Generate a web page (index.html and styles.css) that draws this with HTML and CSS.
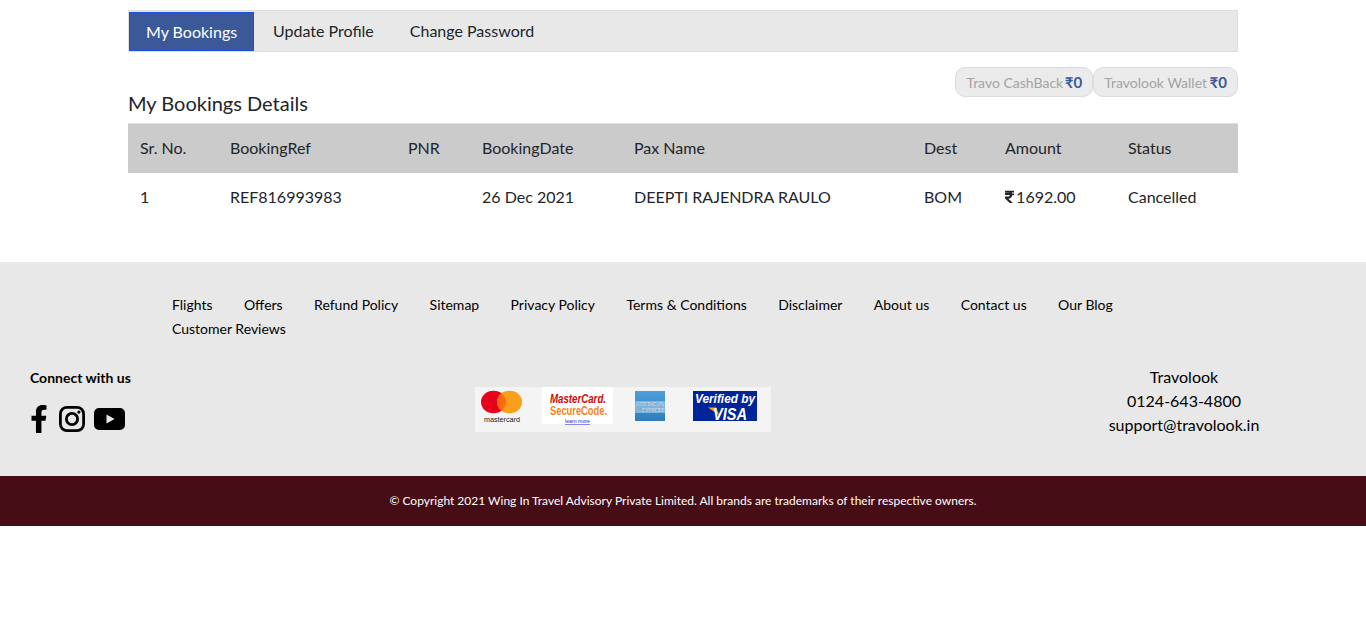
FILE: index.html
```html
<!DOCTYPE html>
<html lang="en">
  <head>
    <meta charset="UTF-8" />
    <meta name="viewport" content="width=device-width, initial-scale=1.0" />
    <title>My Bookings</title>
    <link rel="stylesheet" href="styles.css">
  </head>
  <body>
    <div class="container">
      <div class="tabs">
        <a href="#" class="tab active">My Bookings</a>
        <a href="#" class="tab">Update Profile</a>
        <a href="#" class="tab">Change Password</a>
      </div>

      <div class="wallets">
        <span class="pill">Travo CashBack <b>₹0</b></span>
        <span class="pill">Travolook Wallet <b>₹0</b></span>
      </div>

      <h2 class="title">My Bookings Details</h2>

      <table class="bookings">
        <colgroup>
          <col class="c-sr" />
          <col class="c-ref" />
          <col class="c-pnr" />
          <col class="c-date" />
          <col class="c-pax" />
          <col class="c-dest" />
          <col class="c-amount" />
          <col class="c-status" />
        </colgroup>
        <thead>
          <tr>
            <th>Sr. No.</th>
            <th>BookingRef</th>
            <th>PNR</th>
            <th>BookingDate</th>
            <th>Pax Name</th>
            <th>Dest</th>
            <th>Amount</th>
            <th>Status</th>
          </tr>
        </thead>
        <tbody>
          <tr>
            <td>1</td>
            <td>REF816993983</td>
            <td></td>
            <td>26 Dec 2021</td>
            <td>DEEPTI RAJENDRA RAULO</td>
            <td>BOM</td>
            <td>
              <svg class="rupee" viewBox="0 0 320 512">
                <path d="M308 96c6.627 0 12-5.373 12-12V44c0-6.627-5.373-12-12-12H12C5.373 32 0 37.373 0 44v44.748c0 6.627 5.373 12 12 12h85.28c27.308 0 48.261 5.958 61.97 16.818H12c-6.627 0-12 5.373-12 12v40c0 6.627 5.373 12 12 12h158.757c-6.217 36.086-32.961 58.012-74.757 58.012H12c-6.627 0-12 5.373-12 12v53.012c0 3.349 1.4 6.546 3.861 8.818l165.052 152.356a12.001 12.001 0 0 0 8.139 3.182h82.562c10.924 0 16.166-13.408 8.139-20.818L116.871 319.906c76.499-2.34 131.144-53.395 138.318-127.906H308c6.627 0 12-5.373 12-12v-40c0-6.627-5.373-12-12-12h-58.69c-3.486-11.541-8.28-22.246-14.252-32H308z" />
              </svg>
              1692.00
            </td>
            <td>Cancelled</td>
          </tr>
        </tbody>
      </table>
    </div>

    <footer class="footer">
      <ul class="footer-links">
        <li><a href="#">Flights</a></li>
        <li><a href="#">Offers</a></li>
        <li><a href="#">Refund Policy</a></li>
        <li><a href="#">Sitemap</a></li>
        <li><a href="#">Privacy Policy</a></li>
        <li><a href="#">Terms &amp; Conditions</a></li>
        <li><a href="#">Disclaimer</a></li>
        <li><a href="#">About us</a></li>
        <li><a href="#">Contact us</a></li>
        <li><a href="#">Our Blog</a></li>
        <li><a href="#">Customer Reviews</a></li>
      </ul>

      <div class="footer-row">
        <div class="connect">
          <h4>Connect with us</h4>
          <div class="social">
            <svg class="fb" viewBox="0 0 320 512">
              <path d="M279.14 288l14.22-92.66h-88.91v-60.13c0-25.35 12.42-50.06 52.24-50.06h40.42V6.26S260.43 0 225.36 0c-73.22 0-121.08 44.38-121.08 124.72v70.62H22.89V288h81.39v224h100.17V288z" />
            </svg>
            <svg class="insta" viewBox="0 0 26 26">
              <rect x="1.4" y="1.4" width="23.2" height="23.2" rx="6.5" />
              <circle cx="13" cy="13" r="5.6" />
              <circle class="dot" cx="19.9" cy="6.1" r="1.6" />
            </svg>
            <svg class="yt" viewBox="0 0 31 22">
              <path d="M5 0h21a5 5 0 0 1 5 5v12a5 5 0 0 1-5 5H5a5 5 0 0 1-5-5V5a5 5 0 0 1 5-5zm7.5 6.5v9l8-4.5z" fill-rule="evenodd" />
            </svg>
          </div>
        </div>

        <div class="cards">
          <svg viewBox="0 0 296 45" width="296" height="45">
            <defs>
              <linearGradient id="amex" x1="0" y1="0" x2="0" y2="1">
                <stop offset="0" stop-color="#4f9fdd" />
                <stop offset="1" stop-color="#2f7cba" />
              </linearGradient>
            </defs>
            <rect width="296" height="45" fill="#f4f4f4" />

            <ellipse cx="18.5" cy="15" rx="12.5" ry="11.2" fill="#e8001c" />
            <ellipse cx="34.5" cy="15" rx="12.5" ry="11.2" fill="#fa9f1b" />
            <path d="M26.5 6.4a12.5 11.2 0 0 1 0 17.2a12.5 11.2 0 0 1 0-17.2z" fill="#ff6a10" />
            <text class="mc" x="9" y="34.5" textLength="36" lengthAdjust="spacingAndGlyphs">mastercard</text>

            <rect x="67" y="0" width="71" height="37" fill="#fff" />
            <text class="sc1" x="75" y="16" textLength="56" lengthAdjust="spacingAndGlyphs">MasterCard.</text>
            <text class="sc2" x="75" y="27.5" textLength="57" lengthAdjust="spacingAndGlyphs">SecureCode.</text>
            <text class="sc3" x="90" y="36" textLength="25" lengthAdjust="spacingAndGlyphs">learn more</text>

            <rect x="160" y="4" width="30" height="30" fill="url(#amex)" />
            <rect x="160" y="14" width="30" height="12" fill="#7db4e0" />
            <text class="ax" x="161" y="19" textLength="28" lengthAdjust="spacingAndGlyphs">AMERICAN</text>
            <text class="ax" x="167" y="25" textLength="22" lengthAdjust="spacingAndGlyphs">EXPRESS</text>

            <rect x="218" y="4" width="64" height="30" fill="#00259b" />
            <text class="vb" x="220" y="15.5" textLength="60" lengthAdjust="spacingAndGlyphs">Verified by</text>
            <path d="M233 20.5h8l3.5 8z" fill="#f2a900" />
            <text class="vs" x="238" y="33" textLength="34" lengthAdjust="spacingAndGlyphs">VISA</text>
          </svg>
        </div>

        <div class="contact">
          <div>Travolook</div>
          <div>0124-643-4800</div>
          <div>support@travolook.in</div>
        </div>
      </div>
    </footer>

    <div class="copyright">
      © Copyright 2021 Wing In Travel Advisory Private Limited. All brands are trademarks of their respective owners.
    </div>
  </body>
</html>
```

FILE: styles.css
```css
* {
  box-sizing: border-box;
}
body {
  font-family: Lato, "Open Sans", Arial, sans-serif;
  font-size: 16px;
  line-height: 24px;
  margin: 0;
  color: #212529;
  background-color: #fff;
}
a {
  color: inherit;
  text-decoration: none;
}
.container {
  width: 1110px;
  margin: 0 auto;
  padding-top: 10px;
}
.tabs {
  display: flex;
  height: 42px;
  padding: 1px 1px 0;
  background-color: #e8e8e8;
  border: 1px solid #dedede;
}
.tab {
  padding: 7px 17px 0 19px;
  line-height: 24px;
}
.tab.active {
  margin-left: -1px;
  width: 125px;
  padding: 7px 0 0 16px;
  color: #fff;
  background-color: #3b5998;
  border: 1px solid #1a4fe0;
}
.wallets {
  display: flex;
  justify-content: flex-end;
  margin-top: 15px;
}
.pill {
  height: 30px;
  padding: 2px 10px;
  font-size: 14px;
  color: #a3a3a3;
  background-color: #ebebeb;
  border: 1px solid #dcdcdc;
  border-radius: 10px;
}
.pill b {
  margin-left: -2px;
  font-size: 15px;
  color: #3b5998;
}
.pill + .pill b {
  margin-left: -1px;
}
.title {
  margin: -8px 0 0;
  font-size: 20px;
  font-weight: 400;
  line-height: 28px;
}
.bookings {
  width: 100%;
  margin-top: 6px;
  table-layout: fixed;
  border-collapse: collapse;
}
.c-sr { width: 90px; }
.c-ref { width: 178px; }
.c-pnr { width: 74px; }
.c-date { width: 152px; }
.c-pax { width: 290px; }
.c-dest { width: 81px; }
.c-amount { width: 123px; }
.c-status { width: 122px; }
.bookings th,
.bookings td {
  padding: 12px;
  text-align: left;
  font-weight: 400;
}
.bookings th {
  height: 49px;
  background-color: #cbcbcb;
  border-top: 1px solid #dee2e6;
}
.bookings td {
  height: 49px;
}
.rupee {
  width: 9px;
  height: 16px;
  margin-right: -2px;
  vertical-align: -2px;
  fill: #212529;
}
.footer {
  height: 214px;
  margin-top: 40px;
  padding-top: 31px;
  background-color: #e8e8e8;
  color: #000;
}
.footer-links {
  display: flex;
  flex-wrap: wrap;
  column-gap: 31.4px;
  width: 1000px;
  margin: 0 0 0 172px;
  padding: 0;
  list-style: none;
  font-size: 14px;
}
.footer-row {
  display: grid;
  grid-template-columns: 475px 527px 364px;
  margin-top: 24px;
}
.connect {
  padding-left: 30px;
}
.connect h4 {
  margin: 0;
  font-size: 14px;
  font-weight: 700;
  line-height: 26px;
}
.social {
  display: flex;
  align-items: center;
  margin-top: 14px;
}
.fb {
  width: 18px;
  height: 28px;
  margin-right: 11px;
}
.insta {
  width: 26px;
  height: 26px;
  margin-right: 9px;
  fill: none;
  stroke: #000;
  stroke-width: 2.8;
}
.insta .dot {
  fill: #000;
  stroke: none;
}
.yt {
  width: 31px;
  height: 22px;
}
.cards {
  padding-top: 22px;
}
.cards svg {
  display: block;
}
.cards text {
  font-family: "Liberation Sans", Arial, sans-serif;
}
.mc {
  font-size: 6.5px;
  fill: #222;
}
.sc1 {
  font-size: 12px;
  font-weight: 700;
  font-style: italic;
  fill: #cc0a0a;
}
.sc2 {
  font-size: 12px;
  font-weight: 700;
  fill: #f58220;
}
.sc3 {
  font-size: 5px;
  fill: #1a1ae0;
  text-decoration: underline;
}
.ax {
  font-size: 5px;
  font-weight: 700;
  fill: #fff;
  stroke: #2f6fa8;
  stroke-width: 0.2px;
}
.vb {
  font-size: 13px;
  font-weight: 700;
  font-style: italic;
  fill: #fff;
}
.vs {
  font-size: 16px;
  font-weight: 700;
  font-style: italic;
  fill: #fff;
}
.contact {
  text-align: center;
}
.copyright {
  height: 50px;
  font-size: 12px;
  line-height: 50px;
  text-align: center;
  color: #fff;
  background-color: #470d16;
}
```
